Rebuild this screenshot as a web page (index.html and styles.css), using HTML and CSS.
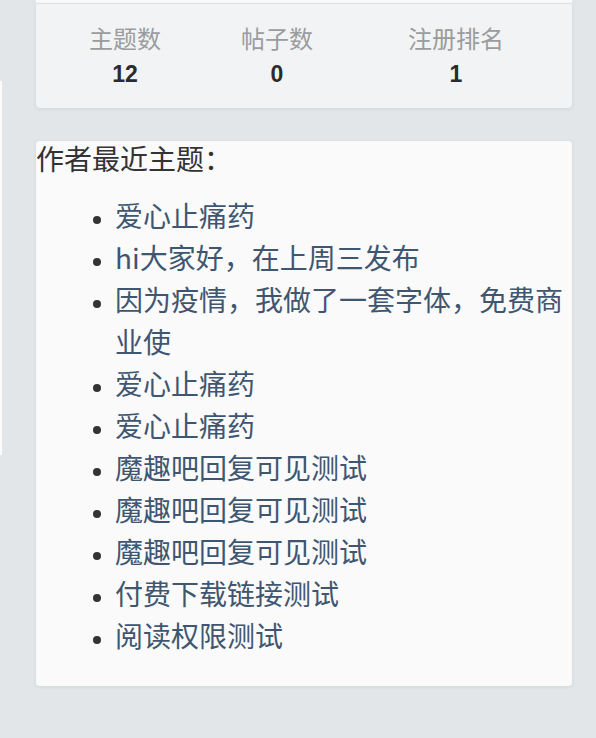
FILE: index.html
```html
<!DOCTYPE html>
<html lang="zh-CN">
<head>
<meta charset="utf-8">
<title>作者信息</title>
<link rel="stylesheet" href="styles.css">
</head>
<body>
<div class="page">
  <aside class="side"></aside>
  <main class="main">
    <div class="prev"></div>
    <section class="card stats">
      <div class="stat">
        <div class="label">主题数</div>
        <div class="num">12</div>
      </div>
      <div class="stat">
        <div class="label">帖子数</div>
        <div class="num">0</div>
      </div>
      <div class="stat">
        <div class="label">注册排名</div>
        <div class="num">1</div>
      </div>
    </section>
    <section class="card recent">
      <div class="title">作者最近主题：</div>
      <ul class="list">
        <li><a href="#">爱心止痛药</a></li>
        <li><a href="#">hi大家好，在上周三发布</a></li>
        <li><a href="#">因为疫情，我做了一套字体，免费商业使</a></li>
        <li><a href="#">爱心止痛药</a></li>
        <li><a href="#">爱心止痛药</a></li>
        <li><a href="#">魔趣吧回复可见测试</a></li>
        <li><a href="#">魔趣吧回复可见测试</a></li>
        <li><a href="#">魔趣吧回复可见测试</a></li>
        <li><a href="#">付费下载链接测试</a></li>
        <li><a href="#">阅读权限测试</a></li>
      </ul>
    </section>
  </main>
</div>
</body>
</html>
```

FILE: styles.css
```css
html, body {
  margin: 0;
  padding: 0;
}
body {
  background: #e2e6e8;
  font-family: "Noto Sans CJK SC", "Microsoft YaHei", sans-serif;
  color: #333;
  height: 738px;
  overflow: hidden;
}
.page {
  display: flex;
  align-items: flex-start;
  gap: 34px;
}
.side {
  width: 2px;
  height: 374px;
  margin-top: 81px;
  background: #fbfbfc;
}
.main {
  width: 536px;
  display: flex;
  flex-direction: column;
}
.prev {
  height: 3px;
  background: #f9fafa;
}
.card {
  border-radius: 0 0 4px 4px;
  box-shadow: 0 1px 4px rgba(0, 0, 0, 0.07);
}
.stats {
  background: #f1f3f4;
  border-top: 1px solid #dde1e3;
  display: grid;
  grid-template-columns: 178fr 126fr 232fr;
  padding: 17px 0 17px;
  text-align: center;
}
.label {
  font-size: 24px;
  line-height: 34px;
  color: #9a9c9e;
}
.num {
  font-family: "Liberation Sans", Arial, sans-serif;
  font-weight: bold;
  font-size: 23px;
  line-height: 34px;
  margin-top: 2px;
  color: #2b2b2b;
}
.recent {
  margin-top: 33px;
  background: #fafafb;
  border-radius: 4px;
  padding-bottom: 30px;
}
.title {
  font-size: 28px;
  line-height: 34px;
  color: #333;
}
.list {
  margin: 19px 0 0;
  padding: 0 0 0 79px;
  font-size: 28px;
  line-height: 42px;
  color: #333;
}
.list li::marker {
  font-size: 20px;
}
.list a {
  color: #3f5670;
  text-decoration: none;
}
```
